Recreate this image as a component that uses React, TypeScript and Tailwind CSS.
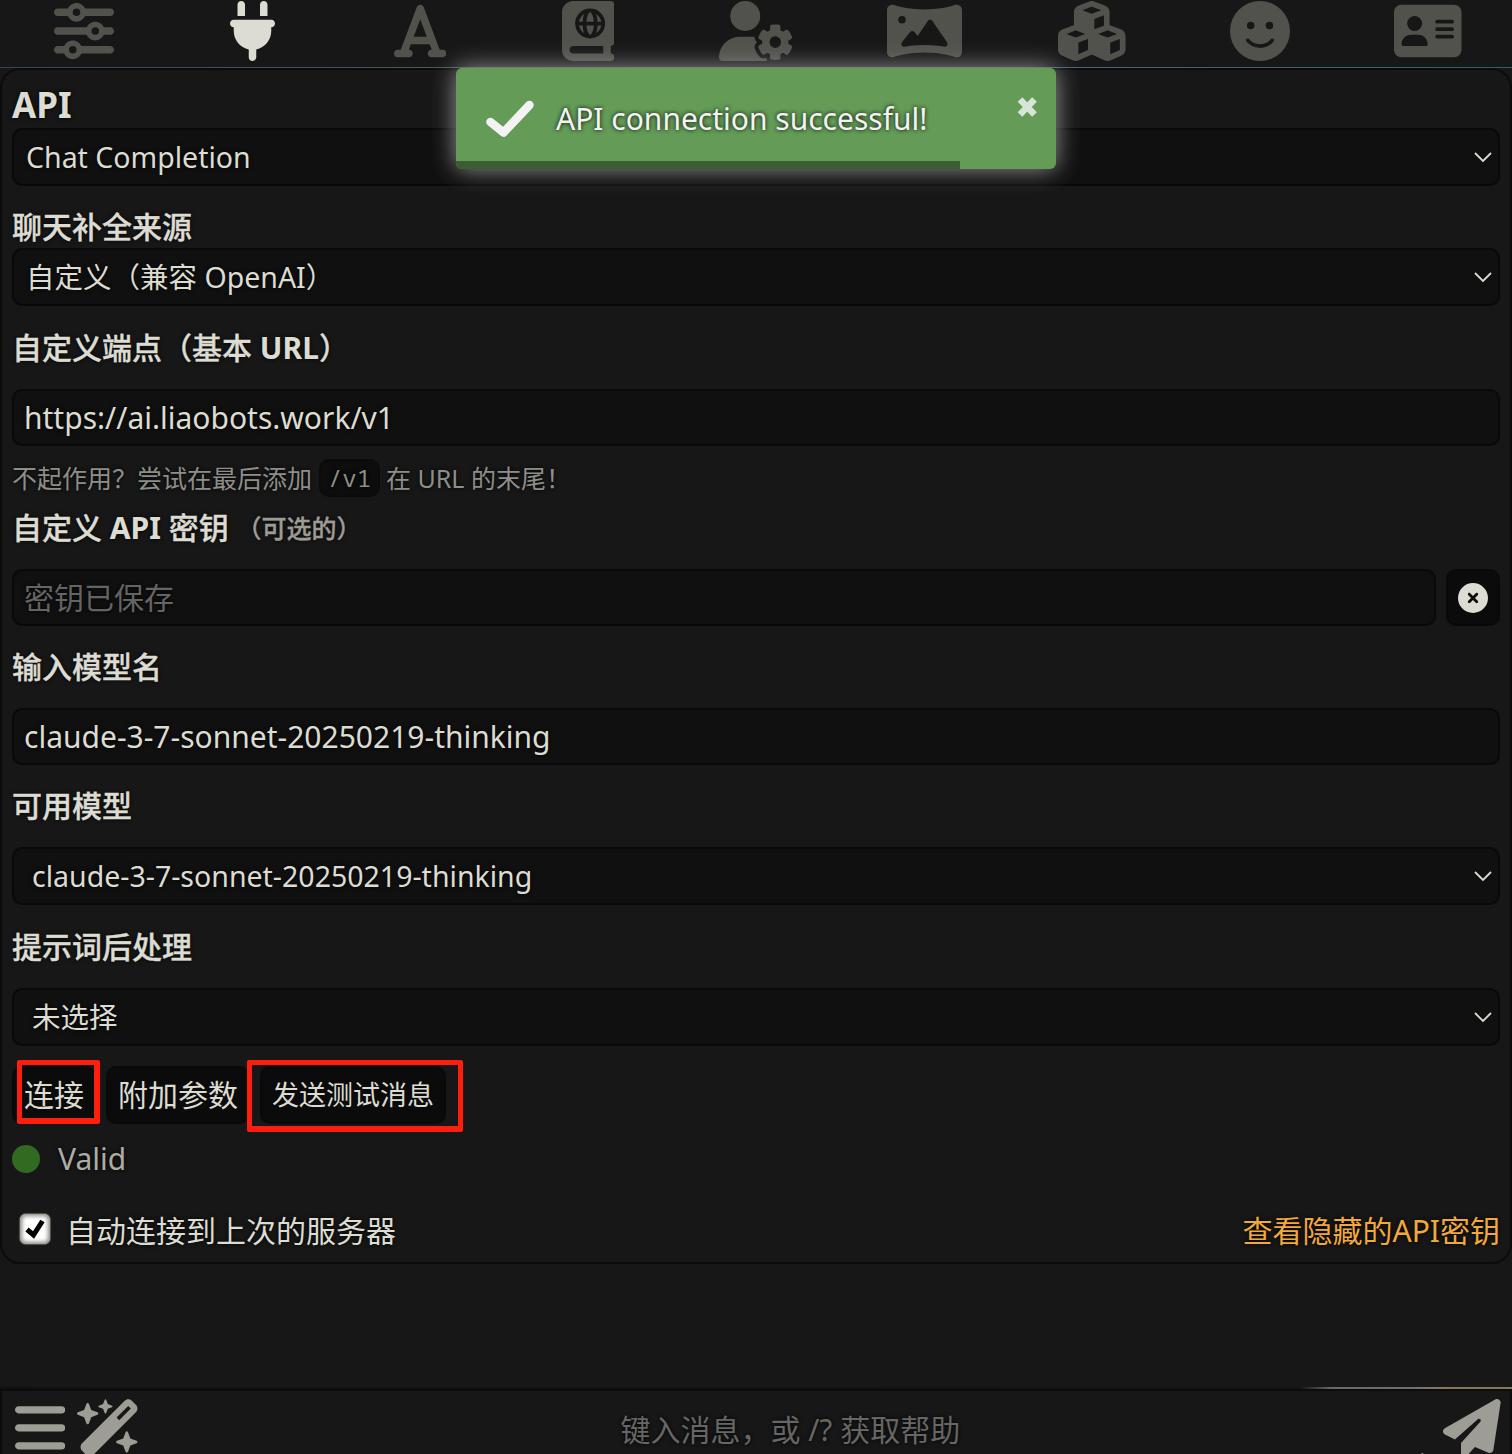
import React from "react";
import {
  FaSliders,
  FaPlug,
  FaFont,
  FaBookAtlas,
  FaUserGear,
  FaPanorama,
  FaCubes,
  FaFaceSmile,
  FaAddressCard,
  FaBars,
  FaWandMagicSparkles,
  FaPaperPlane,
  FaCircleXmark,
} from "react-icons/fa6";

const tabs = [
  { Icon: FaSliders, look: "w-[60px] text-[#52524d]" },
  { Icon: FaPlug, look: "w-[45px] text-[#dcdcd2]" },
  { Icon: FaFont, look: "w-[52.5px] text-[#52524d]" },
  { Icon: FaBookAtlas, look: "w-[52.5px] text-[#52524d]" },
  { Icon: FaUserGear, look: "w-[75px] text-[#52524d]" },
  { Icon: FaPanorama, look: "w-[75px] text-[#52524d]" },
  { Icon: FaCubes, look: "w-[67.5px] text-[#52524d]" },
  { Icon: FaFaceSmile, look: "w-[60px] text-[#52524d]" },
  { Icon: FaAddressCard, look: "w-[67.5px] text-[#52524d]" },
];

function Label({ className, children }: { className: string; children: React.ReactNode }) {
  return (
    <div
      className={`flex items-center font-medium whitespace-pre [-webkit-text-stroke:0.35px_currentColor] [&_b]:[-webkit-text-stroke:0] ${className}`}
    >
      {children}
    </div>
  );
}

function Select({ className, children }: { className: string; children: React.ReactNode }) {
  return (
    <div
      className={`flex h-[58px] shrink-0 items-center justify-between rounded-[10px] border-2 border-[#090909] bg-[#101010] pr-[5px] text-[28.5px] ${className}`}
    >
      <span className="pt-[1.5px] whitespace-pre">{children}</span>
      <svg width="20" height="12" viewBox="0 0 20 12" fill="none" stroke="#dcdcd2" strokeWidth="1.8">
        <path d="M2 2 L10 10 L18 2" />
      </svg>
    </div>
  );
}

function Field({ className = "", children }: { className?: string; children: React.ReactNode }) {
  return (
    <div
      className={`flex h-[57px] shrink-0 items-center rounded-[10px] border-2 border-[#090909] bg-[#101010] pl-[10px] text-[30px] ${className}`}
    >
      <span className="whitespace-pre">{children}</span>
    </div>
  );
}

function Toast() {
  return (
    <div className="absolute top-[68px] left-[456px] flex h-[101px] w-[600px] overflow-hidden rounded-[6px] bg-[#639b57] text-[#f3f3f3] shadow-[0_0_24px_#999]">
      <svg className="mt-[32px] ml-[29px] shrink-0" width="50" height="38" viewBox="0 0 50 38" fill="none">
        <path d="M5.5 22 L18.5 32.5 L44.5 5" stroke="#f3f3f3" strokeWidth="8.5" strokeLinecap="round" strokeLinejoin="round" />
      </svg>
      <div className="ml-[21px] h-[102px] flex-1 text-[30px] leading-[102px] whitespace-pre">API connection successful!</div>
      <svg className="mt-[28px] mr-[18.5px] shrink-0" width="22" height="22" viewBox="0 0 22 22">
        <path d="M4 3.5 L18.5 18.5 M18.5 3.5 L4 18.5" stroke="#d8e4d5" strokeWidth="6.5" />
      </svg>
      <div className="absolute bottom-0 left-0 h-2 w-[504px] bg-[#3c5c34]" />
    </div>
  );
}

export default function App() {
  return (
    <div className="relative flex h-[1454px] w-[1512px] flex-col overflow-hidden bg-[#171717] font-['Noto_Sans','Noto_Sans_CJK_SC',sans-serif] text-[#dcdcd2] [text-shadow:0_0_4px_#000]">
      <header className="grid h-[67px] shrink-0 grid-cols-9 pt-[1px]">
        {tabs.map(({ Icon, look }, i) => (
          <div key={i} className="flex justify-center">
            <Icon className={`h-[60px] ${look}`} />
          </div>
        ))}
      </header>
      <div className="h-px shrink-0 bg-linear-to-r from-[#354451] via-[#59696e] to-[#286174]" />

      <main className="flex h-[1196px] shrink-0 flex-col rounded-[20px] border-2 border-[#0b0b0b] px-[10px]">
        <Label className="mt-[13px] h-[45px] text-[35px]">
          <b>API</b>
        </Label>
        <Select className="pl-3">Chat Completion</Select>
        <Label className="mt-[18px] h-[44px] text-[30px]">聊天补全来源</Label>
        <Select className="pl-3">自定义（兼容 OpenAI）</Select>
        <Label className="h-[83px] text-[30px]">
          自定义端点（基本 <b>URL</b>）
        </Label>
        <Field>https://ai.liaobots.work/v1</Field>
        <div className="flex h-[64px] shrink-0 items-center pt-px text-[25px] whitespace-pre text-[#8e8e88]">
          <span>不起作用？尝试在最后添加</span>
          <code className="mx-[7px] mb-px flex h-[38px] w-[61px] items-center justify-center rounded-[10px] border-2 border-[#0b0b0b] bg-[#0d0d0d] font-['Noto_Sans_Mono','DejaVu_Sans_Mono',monospace] text-[24px]">
            /v1
          </code>
          <span className="-ml-px">在 URL 的末尾！</span>
        </div>
        <Label className="mb-[24px] h-[35px] text-[30px]">
          自定义 <b>API</b> 密钥 <span className="mt-[3px] text-[25px] text-[#9c9c94]">（可选的）</span>
        </Label>
        <div className="flex shrink-0 gap-[10px]">
          <Field className="flex-1 text-[#646464]">密钥已保存</Field>
          <button className="flex h-[57px] w-[54px] items-center justify-center rounded-[10px] border-2 border-[#090909] bg-[#0b0b0b]">
            <FaCircleXmark className="size-[30px]" />
          </button>
        </div>
        <Label className="h-[82px] pb-[2px] text-[30px]">输入模型名</Label>
        <Field>claude-3-7-sonnet-20250219-thinking</Field>
        <Label className="h-[82px] pb-[2px] text-[30px]">可用模型</Label>
        <Select className="pl-[18px]">claude-3-7-sonnet-20250219-thinking</Select>
        <Label className="h-[83px] text-[30px]">提示词后处理</Label>
        <Select className="pl-[18px]">未选择</Select>

        <div className="mt-[20px] flex h-[58px] shrink-0 text-[30px] whitespace-nowrap">
          <button className="relative flex w-[84px] items-center justify-center rounded-[10px] border-2 border-[#090909] bg-[#0b0b0b] pb-[2px]">
            连接
            <span className="absolute -top-[8px] left-[3px] h-[64px] w-[83px] rounded-[2px] border-5 border-[#ff1d0d] border-r-[6px] border-b-[6px]" />
          </button>
          <button className="ml-[10px] flex w-[144px] items-center justify-center rounded-[10px] border-2 border-[#090909] bg-[#0b0b0b] pb-[2px]">
            附加参数
          </button>
          <button className="relative ml-[10px] flex w-[186px] items-center justify-center rounded-[10px] border-2 border-[#090909] bg-[#0b0b0b] text-[27px]">
            发送测试消息
            <span className="absolute -top-[8px] -left-[15px] h-[72px] w-[216px] rounded-[2px] border-5 border-[#ff1d0d] border-b-[6px]" />
          </button>
        </div>

        <div className="flex h-[70px] shrink-0 items-center">
          <span className="size-[28px] rounded-full bg-[#316a20]" />
          <span className="ml-[18px] pb-[2px] text-[30px] text-[#acaca5]">Valid</span>
        </div>

        <div className="flex h-[68px] shrink-0 items-center pt-[2px] text-[30px] whitespace-pre">
          <span className="ml-[8px] flex size-[30px] items-center justify-center rounded-[6px] bg-white shadow-[inset_0_0_4px_2px_#888880,0_0_1px_1px_#55554f]">
            <svg width="22" height="22" viewBox="0 0 22 22">
              <path d="M3 11.5 L9.5 17 L18.5 3" fill="none" stroke="#000" strokeWidth="5" />
            </svg>
          </span>
          <span className="ml-[16px] pt-[2px]">自动连接到上次的服务器</span>
          <span className="ml-auto pt-[2px] text-[#f2a93b]">查看隐藏的API密钥</span>
        </div>
      </main>

      <footer className="mt-auto flex h-[67px] shrink-0 flex-col">
        <div className="h-[2px] shrink-0 bg-[linear-gradient(90deg,#0c1017_0%,#10141b_86%,#67686a_88%,#68706f_93%,#8d745e_95%,#857660_100%)]" />
        <div className="relative flex flex-1 items-start border-x-2 border-t-2 border-[#0c0c0c] text-[#9d9d95]">
          <FaBars className="mt-[8px] ml-[13px] h-[57.6px] w-[50.4px] shrink-0" />
          <FaWandMagicSparkles className="mt-[8px] ml-[12px] h-[57.6px] w-[64px] shrink-0" />
          <div className="mt-[19px] ml-[479px] text-[30px] leading-[40px] whitespace-pre text-[#666664]">键入消息，或 /? 获取帮助</div>
          <FaPaperPlane className="mt-[8px] mr-[9.5px] ml-auto size-[57.6px] shrink-0" />
          <svg className="absolute right-[86px] bottom-0" width="6" height="4" viewBox="0 0 6 4">
            <path d="M1 4 L5 0" stroke="#8a8a86" strokeWidth="1.5" />
          </svg>
        </div>
      </footer>
      <Toast />
    </div>
  );
}
